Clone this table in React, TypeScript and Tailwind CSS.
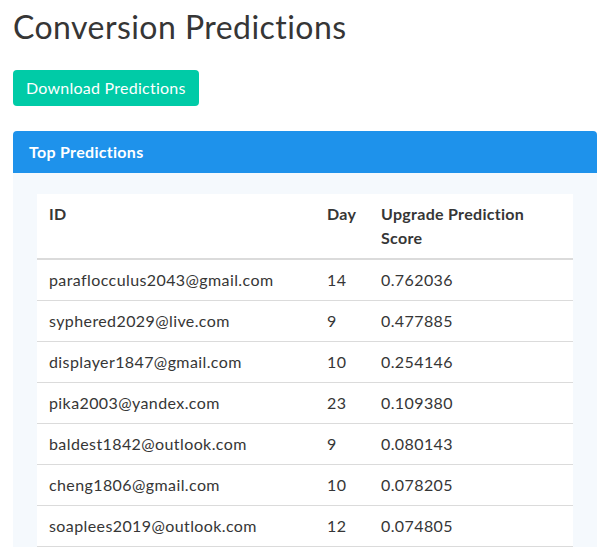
const rows = [
  { id: "paraflocculus2043@gmail.com", day: 14, score: "0.762036" },
  { id: "syphered2029@live.com", day: 9, score: "0.477885" },
  { id: "displayer1847@gmail.com", day: 10, score: "0.254146" },
  { id: "pika2003@yandex.com", day: 23, score: "0.109380" },
  { id: "baldest1842@outlook.com", day: 9, score: "0.080143" },
  { id: "cheng1806@gmail.com", day: 10, score: "0.078205" },
  { id: "soaplees2019@outlook.com", day: 12, score: "0.074805" },
];

export default function App() {
  return (
    <div className="min-h-screen bg-white px-[13px] pt-[9px] font-['Lato','Noto_Sans',sans-serif] text-[#363636]">
      <h1 className="text-[32px] leading-[1.125] font-normal tracking-[0.45px]">Conversion Predictions</h1>
      <button className="mt-[25px] h-9 rounded-[4px] bg-[#00cba7] px-[13px] text-[16px] tracking-[0.25px] text-white">
        Download Predictions
      </button>
      <div className="mt-[25px] overflow-hidden rounded-t-[4px]">
        <div className="flex h-[42px] items-center bg-[#1e92eb] px-[16px] text-[16px] font-bold tracking-[0.3px] text-white">
          Top Predictions
        </div>
        <div className="bg-[#f5f9fd] px-6 pt-[21px]">
          <table className="w-full table-fixed bg-white text-[16px] tracking-[0.4px]">
            <colgroup>
              <col className="w-[278px]" />
              <col className="w-[54px]" />
              <col />
            </colgroup>
            <thead>
              <tr className="border-b-2 border-[#dbdbdb]">
                <th className="px-3 py-2 text-left align-top leading-6 font-bold tracking-[0.3px]">ID</th>
                <th className="px-3 py-2 text-left align-top leading-6 font-bold tracking-[0.3px]">Day</th>
                <th className="px-3 py-2 pr-[40px] text-left align-top leading-6 font-bold tracking-[0.3px]">
                  Upgrade Prediction Score
                </th>
              </tr>
            </thead>
            <tbody>
              {rows.map((r) => (
                <tr key={r.id} className="border-b border-[#dbdbdb]">
                  <td className="px-3 py-2 leading-6">{r.id}</td>
                  <td className="px-3 py-2 leading-6">{r.day}</td>
                  <td className="px-3 py-2 leading-6">{r.score}</td>
                </tr>
              ))}
            </tbody>
          </table>
        </div>
      </div>
    </div>
  );
}
